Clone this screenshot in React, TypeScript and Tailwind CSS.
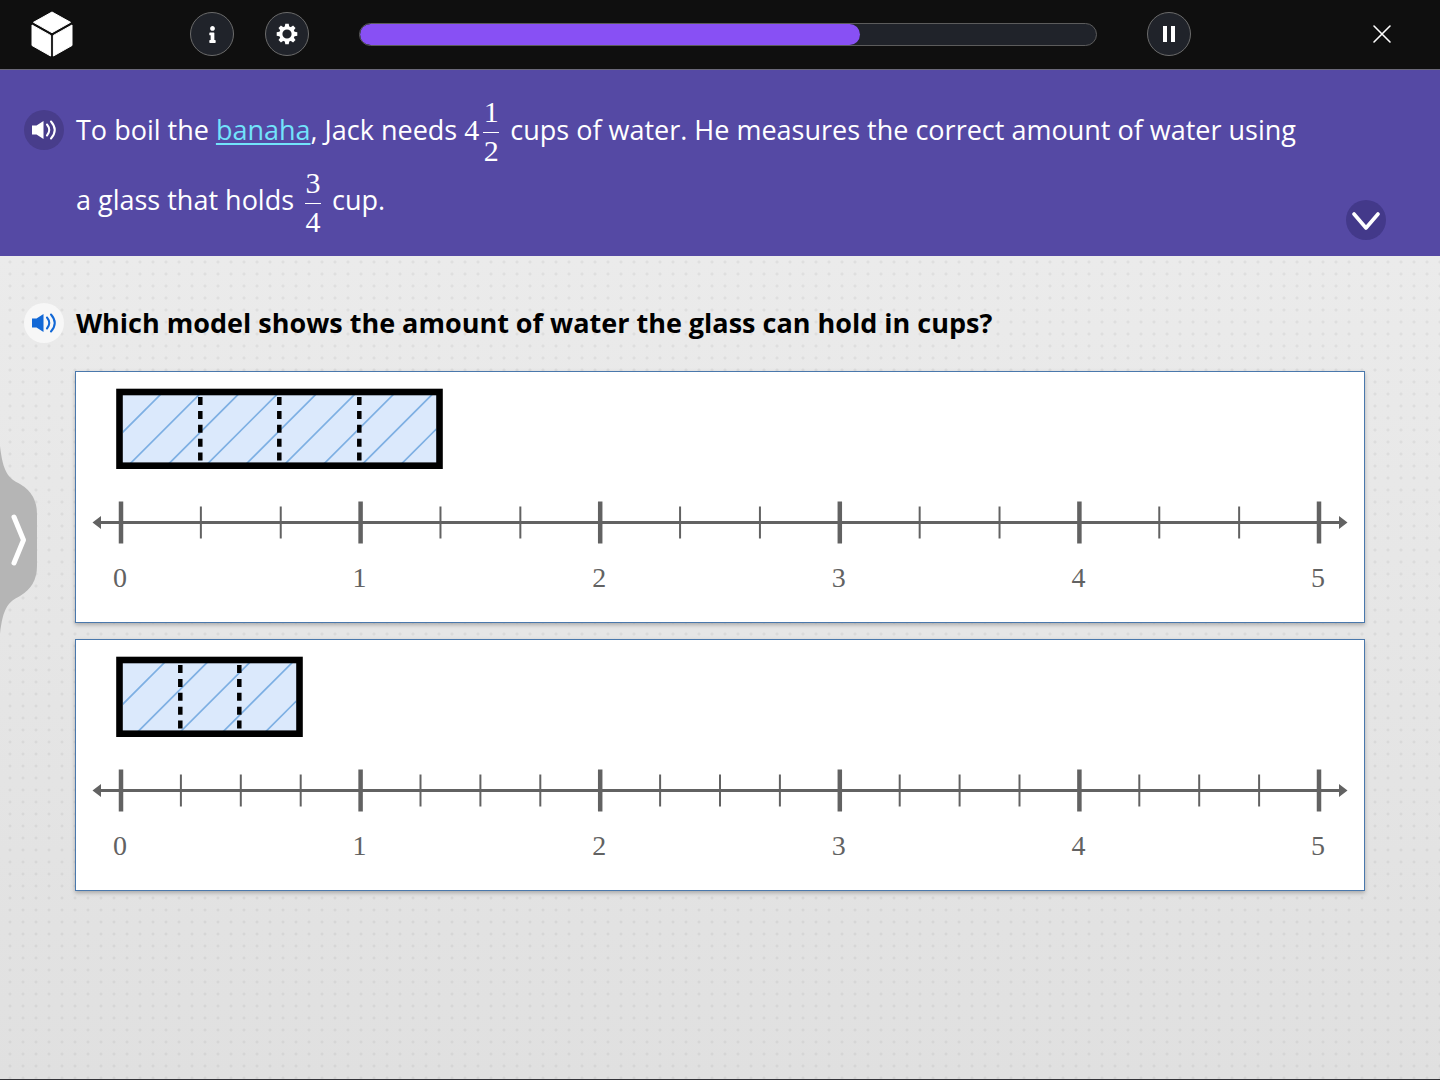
import React from 'react'
import { FaInfo } from 'react-icons/fa'

interface FractionProps {
  top: number
  bottom: number
}

interface ModelProps {
  // parts each whole is split into on the number line
  parts: number
  barWidth: number
  dividers: number[]
  hatchStart: number
  hatchStep: number
  label: string
}

const models: ModelProps[] = [
  {
    parts: 3,
    barWidth: 326,
    dividers: [124, 203, 283],
    hatchStart: 83,
    hatchStep: 38.8,
    label: 'Four parts, number line in thirds',
  },
  {
    parts: 4,
    barWidth: 186,
    dividers: [104, 163],
    hatchStart: 87,
    hatchStep: 42.6,
    label: 'Three parts, number line in fourths',
  },
]

const roundButton =
  'flex size-11 shrink-0 items-center justify-center rounded-full border border-[#6b6b6b] bg-[#20232a] text-white'

function Logo() {
  return (
    <svg viewBox="0 0 42 46" className="h-[46px] w-[42px] shrink-0" fill="white" stroke="white" strokeLinejoin="round">
      <path d="M21 1 39.500 11.300 21 21.700 2.500 11.300Z" />
      <path d="M1 14 19.600 24.400V45L1 34.500Z" />
      <path d="M41 14 22.400 24.400V45L41 34.500Z" />
    </svg>
  )
}

function GearIcon() {
  const teeth = [0, 45, 90, 135, 180, 225, 270, 315]
  return (
    <svg viewBox="-11 -11 22 22" className="size-[22px]">
      <circle r="6.200" fill="none" stroke="white" strokeWidth="3.200" />
      {teeth.map((angle) => (
        <path key={angle} d="M-2.400-6.500-1.700-10.300H1.700L2.400-6.500Z" fill="white" transform={`rotate(${angle})`} />
      ))}
    </svg>
  )
}

function SpeakerIcon() {
  return (
    <svg viewBox="0 0 26 22" className="h-[22px] w-[26px]">
      <path d="M1 6.500H5.500L12.500 2V20L5.500 15.500H1Z" fill="currentColor" />
      <path
        d="M16 5.500Q20.500 11 16 16.500M20 2.500Q27.500 11 20 19.500"
        fill="none"
        stroke="currentColor"
        strokeWidth="2"
        strokeLinecap="round"
      />
    </svg>
  )
}

function Fraction({ top, bottom }: FractionProps) {
  return (
    <span className="mx-1 inline-flex flex-col items-center pb-0.5 align-middle font-['Liberation_Serif',serif] text-3xl leading-6">
      <span>{top}</span>
      <span className="mt-2 mb-1.5 h-px w-4 bg-white" />
      <span>{bottom}</span>
    </span>
  )
}

function Model({ parts, barWidth, dividers, hatchStart, hatchStep, label }: ModelProps) {
  const unit = 239.6
  const ticks = Array.from({ length: parts * 5 + 1 }, (_, i) => i)
  const hatches = Array.from({ length: 9 }, (_, i) => hatchStart + i * hatchStep)

  return (
    <button
      type="button"
      aria-label={label}
      className="block w-full border border-[#4a78ac] bg-white shadow-[0_2px_4px_rgba(0,0,0,0.25)]"
    >
      <svg viewBox="0 0 1288 250" className="block w-full">
        <clipPath id={`bar-${parts}`}>
          <rect x="47" y="23" width={barWidth - 13} height="68" />
        </clipPath>
        <rect x="43.500" y="20" width={barWidth - 6} height="74" fill="#dbe9fc" />
        <g clipPath={`url(#bar-${parts})`} stroke="#7dafe3" strokeWidth="1.700">
          {hatches.map((x) => (
            <path key={x} d={`M${x + 4} 20L${x - 76} 100`} />
          ))}
        </g>
        {dividers.map((x) => (
          <path key={x} d={`M${x + 0.3} 25V90`} stroke="black" strokeWidth="4.500" strokeDasharray="8 5.900" />
        ))}
        <rect x="43.500" y="20" width={barWidth - 6} height="73.700" fill="none" stroke="black" strokeWidth="6.600" />

        <path d="M22 150.500H1266" stroke="#626262" strokeWidth="3" />
        <path d="M16.500 150.500 25 144V157ZM1271.500 150.500 1263 144V157Z" fill="#626262" />
        {ticks.map((i) => {
          const x = 45 + (i * unit) / parts
          return i % parts === 0 ? (
            <path key={i} d={`M${x} 129.500V171.500`} stroke="#626262" strokeWidth="4.500" />
          ) : (
            <path key={i} d={`M${x} 134.500V166.500`} stroke="#626262" strokeWidth="2" />
          )
        })}
        {[0, 1, 2, 3, 4, 5].map((n) => (
          <text
            key={n}
            x={44 + n * unit}
            y="215"
            textAnchor="middle"
            fill="#626262"
            className="font-['Liberation_Serif',serif] text-[28px]"
          >
            {n}
          </text>
        ))}
      </svg>
    </button>
  )
}

export default function App() {
  return (
    <div className="flex min-h-screen flex-col border-b border-[#333338] bg-[#e5e5e5] font-['Open_Sans',sans-serif]">
      <header className="flex h-[70px] items-center border-b border-[#6a6878] bg-[#0f0f0f] pr-12 pb-px pl-[31px]">
        <Logo />
        <button type="button" aria-label="Information" className={`${roundButton} ml-[117px]`}>
          <FaInfo size={17} />
        </button>
        <button type="button" aria-label="Settings" className={`${roundButton} ml-[31px]`}>
          <GearIcon />
        </button>
        <div
          role="progressbar"
          aria-label="Lesson progress"
          aria-valuenow={68}
          className="mx-[50px] h-[23px] flex-1 overflow-hidden rounded-full border border-[#5c5c5c] bg-[#20232a]"
        >
          <div className="h-full rounded-full bg-[#8850f4]" style={{ width: '68%' }} />
        </div>
        <button type="button" aria-label="Pause" className={roundButton}>
          <svg viewBox="0 0 14 18" className="h-[18px] w-3.5" fill="white">
            <path d="M1 1H5V17H1ZM9 1H13V17H9Z" />
          </svg>
        </button>
        <button type="button" aria-label="Close" className="ml-[181px] text-white">
          <svg viewBox="0 0 20 20" className="size-5" stroke="currentColor" strokeWidth="1.600" strokeLinecap="round">
            <path d="M2 2 18 18M18 2 2 18" />
          </svg>
        </button>
      </header>

      <section className="flex items-start bg-[#5549a4] px-6 pt-[25px] pb-5 text-white">
        <button
          type="button"
          aria-label="Read the problem aloud"
          className="mt-[15px] mr-3 flex size-10 shrink-0 items-center justify-center rounded-full bg-[#483d8b]"
        >
          <SpeakerIcon />
        </button>
        <p className="mr-8 flex-1 text-[27px] leading-[70px]">
          To boil the{' '}
          <a href="#banaha" className="text-[#72e3fb] underline decoration-2 underline-offset-3">
            banaha
          </a>
          , Jack needs <span className="font-['Liberation_Serif',serif] text-3xl leading-none">4</span>
          <Fraction top={1} bottom={2} /> cups of water. He measures the correct amount of water using{' '}
          <span className="whitespace-nowrap">
            a glass that holds <Fraction top={3} bottom={4} /> cup.
          </span>
        </p>
        <button
          type="button"
          aria-label="Collapse the problem"
          className="mr-[30px] mb-[-4px] flex size-10 shrink-0 items-center justify-center self-end rounded-full bg-[#43398a]"
        >
          <svg viewBox="0 0 28 20" className="h-5 w-7" fill="none" stroke="white" strokeWidth="3.600" strokeLinecap="round" strokeLinejoin="round">
            <path d="M2 4 14 18 26 4" />
          </svg>
        </button>
      </section>

      <main className="flex-1 bg-[radial-gradient(circle_at_10px_6px,rgba(0,0,0,0.05)_1px,transparent_2px),linear-gradient(#ebebeb,#e0e0e0)] bg-[size:13px_12px,100%_100%] px-6 pt-[47px]">
        <div className="flex items-center">
          <button
            type="button"
            aria-label="Read the question aloud"
            className="mr-3 flex size-10 shrink-0 items-center justify-center rounded-full bg-[#f7f7f7] text-[#1268d6]"
          >
            <SpeakerIcon />
          </button>
          <h1 className="text-[27px] leading-10 font-bold text-black">
            Which model shows the amount of water the glass can hold in cups?
          </h1>
        </div>
        <div className="mt-7 flex flex-col gap-4 px-[51px]">
          {models.map((model) => (
            <Model key={model.parts} {...model} />
          ))}
        </div>
      </main>

      <button type="button" aria-label="Open side panel" className="fixed top-1/2 left-0 -translate-y-1/2">
        <svg viewBox="0 0 38 188" className="h-[188px] w-[38px]">
          <path d="M0 0C3 26 8 32 20 38Q37 48 37 68V120Q37 140 20 150C8 156 3 162 0 188Z" fill="#b5b5b5" />
          <path d="M14 71 23.500 94 14 117" fill="none" stroke="white" strokeWidth="5" strokeLinecap="round" strokeLinejoin="round" />
        </svg>
      </button>
    </div>
  )
}
